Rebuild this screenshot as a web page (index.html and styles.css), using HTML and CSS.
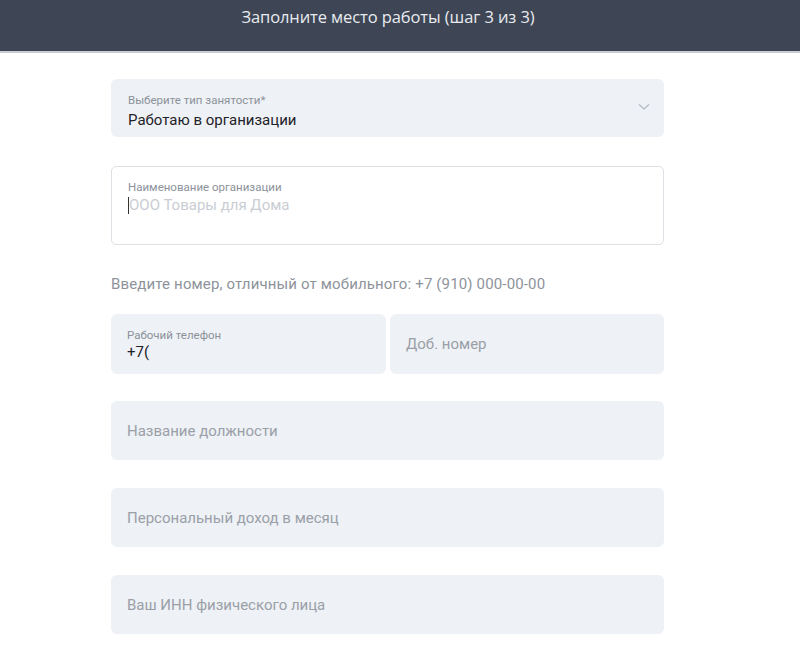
FILE: index.html
```html
<!DOCTYPE html>
<html lang="ru">
<head>
<meta charset="utf-8">
<title>Место работы</title>
<link rel="stylesheet" href="styles.css">
</head>
<body>
<header class="topbar">
  <h1 class="topbar-title">Заполните место работы (шаг 3 из 3)</h1>
</header>
<main class="form">
  <div class="field field-select">
    <div class="field-body">
      <span class="field-label">Выберите тип занятости*</span>
      <span class="field-value">Работаю в организации</span>
    </div>
    <svg class="chevron" width="12" height="8" viewBox="0 0 12 8"><path d="M1 1.5 L6 6 L11 1.5" fill="none" stroke="#b4b9c2" stroke-width="1.3"/></svg>
  </div>

  <div class="field field-outline">
    <span class="field-label">Наименование организации</span>
    <span class="field-placeholder-light"><span class="caret"></span>ООО Товары для Дома</span>
  </div>

  <p class="hint">Введите номер, отличный от мобильного: +7 (910) 000-00-00</p>

  <div class="row">
    <div class="field field-phone">
      <span class="field-label">Рабочий телефон</span>
      <span class="field-value">+7(</span>
    </div>
    <div class="field field-ext">
      <span class="field-placeholder">Доб. номер</span>
    </div>
  </div>

  <div class="field field-plain"><span class="field-placeholder">Название должности</span></div>
  <div class="field field-plain"><span class="field-placeholder">Персональный доход в месяц</span></div>
  <div class="field field-plain"><span class="field-placeholder">Ваш ИНН физического лица</span></div>
</main>
</body>
</html>
```

FILE: styles.css
```css
* { box-sizing: border-box; }
html, body { margin: 0; padding: 0; background: #ffffff; }
body { font-family: Roboto, "Liberation Sans", Arial, sans-serif; }

.topbar {
  height: 53px;
  background: #3e4656;
  border-bottom: 2px solid #c9ccd1;
  padding: 5px 24px 0 0;
  text-align: center;
}
.topbar-title {
  margin: 0;
  font-family: "Open Sans", "DejaVu Sans", sans-serif;
  font-weight: 400;
  font-size: 16.5px;
  line-height: 24px;
  color: #e9ebef;
  letter-spacing: -0.1px;
}

.form {
  width: 553px;
  margin: 26px 0 0 111px;
  display: flex;
  flex-direction: column;
}

.field {
  border-radius: 6px;
  background: #eef1f5;
  display: flex;
  flex-direction: column;
  padding: 0 16px;
}

.field-label {
  font-size: 11.5px;
  line-height: 14px;
  color: #8c919a;
}
.field-value {
  font-size: 15px;
  line-height: 20px;
  color: #1f2228;
}
.field-placeholder {
  font-size: 15px;
  line-height: 20px;
  color: #9a9fa8;
}

.field-select {
  height: 58px;
  flex-direction: row;
  align-items: center;
  justify-content: space-between;
  padding: 0 14px 0 17px;
}
.field-body { display: flex; flex-direction: column; padding-top: 7px; gap: 3px; }
.chevron { margin-top: -2px; }

.field-outline {
  margin-top: 29px;
  height: 79px;
  background: #ffffff;
  border: 1px solid #dcdfe4;
  border-radius: 5px;
  padding: 13px 16px 0;
}
.field-placeholder-light {
  margin-top: 1px;
  font-size: 15px;
  line-height: 20px;
  color: #c9cdd3;
  display: flex;
  align-items: center;
}
.caret {
  display: inline-block;
  width: 1px;
  height: 17px;
  background: #333;
}

.hint {
  margin: 29px 0 0;
  font-size: 15px;
  line-height: 20px;
  color: #8e939b;
  letter-spacing: 0.15px;
}

.row {
  margin-top: 20px;
  display: flex;
  gap: 4px;
}
.field-phone {
  width: 275px;
  height: 60px;
  justify-content: center;
  padding-top: 1px;
}
.field-ext {
  flex: 1;
  height: 60px;
  justify-content: center;
}

.field-plain {
  height: 59px;
  margin-top: 27px;
  justify-content: center;
}
.field-plain + .field-plain { margin-top: 28px; }
```
